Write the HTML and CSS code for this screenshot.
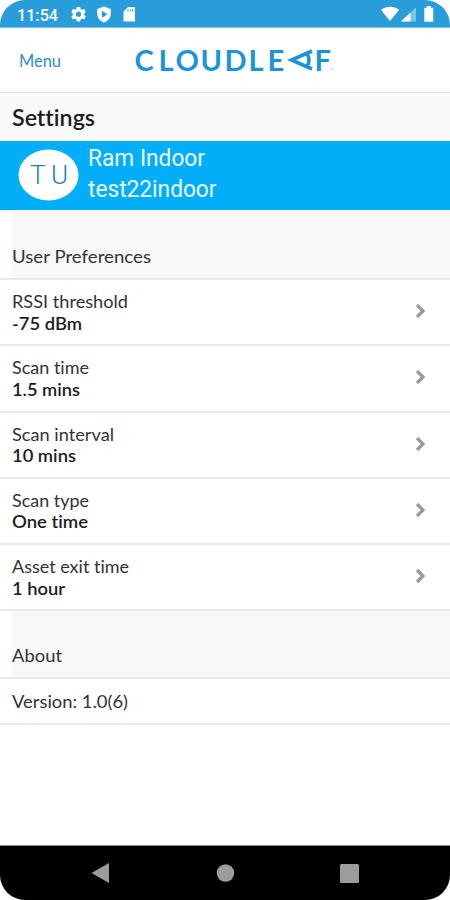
FILE: index.html
```html
<!DOCTYPE html>
<html lang="en">
<head>
<meta charset="utf-8">
<title>Settings</title>
<link rel="stylesheet" href="styles.css">
</head>
<body>
<div class="phone">
  <header class="status">
    <span class="clock"><svg width="42" height="18"><text x="0" y="15.500" textLength="41" lengthAdjust="spacingAndGlyphs">11:54</text></svg></span>
    <svg class="status-left" width="66" height="18" viewBox="0 0 66 18" fill="#fff">
      <path fill-rule="evenodd" d="M5.800 2h3.400l.5 2 1.300.8 2.100-.8 1.700 2.900-1.700 1.500v1.600l1.700 1.500-1.700 2.900-2.100-.8-1.300.8-.5 2.100H5.800l-.5-2.100-1.300-.8-2.100.8L.2 11.500 1.900 10V8.400L.2 6.900 1.900 4l2.100.8 1.300-.8zM7.500 6.600a2.600 2.600 0 1 0 0 5.200 2.600 2.600 0 0 0 0-5.200z"/>
      <path fill-rule="evenodd" d="M33 1.500l6.800 2.600v4.700c0 4-2.500 7-6.800 8.700-4.300-1.700-6.800-4.700-6.800-8.700V4.100zM30.800 5.700v7l5.800-3.500z"/>
      <path fill-rule="evenodd" d="M57 2h7v14.500H52.500V6.500zM56.500 4.500v2h1v-2zM58.700 4.500v2h1v-2zM61 4.500v2h1v-2z"/>
    </svg>
    <svg class="status-right" width="54" height="18" viewBox="0 0 54 18" fill="#fff">
      <path d="M0 5C5.300.7 12.700.7 18 5L9 16z"/>
      <path d="M35 2.500v14H20z" opacity=".4"/><path d="M29.500 7.600v8.900H20z"/>
      <path d="M45.800 1h4v1.700H52.300v14h-9V2.700h2.500z"/>
    </svg>
  </header>
  <nav class="appbar">
    <svg class="menu" width="46" height="24"><text x="0" y="17.500" textLength="42" lengthAdjust="spacingAndGlyphs">Menu</text></svg>
    <svg class="logo" width="200" height="30" viewBox="0 0 200 30">
      <text x="-1.500 22.500 39.500 64.500 88.500 112.500 131.500" y="25.500">CLOUDLE</text>
      <path d="M176 6L155.500 15l20.500 9M171 8.500q4 6.500 0 13" fill="none" stroke="#1b94d8" stroke-width="3.600"/>
      <text x="178.500" y="25.500">F</text>
      <path d="M194 24h3.500" stroke="#a9d8f0"/>
    </svg>
  </nav>
  <h1 class="title"><svg width="90" height="30"><text x="0" y="22.500" textLength="83" lengthAdjust="spacingAndGlyphs">Settings</text></svg></h1>
  <section class="profile">
    <svg class="avatar" width="60" height="52" viewBox="0 0 60 52"><ellipse cx="30.500" cy="26" rx="30" ry="25.500" fill="#fff"/><text x="12" y="34.500">T</text><text x="33" y="34.500">U</text></svg>
    <svg class="names" width="134" height="64"><text x="0" y="22" textLength="117" lengthAdjust="spacingAndGlyphs">Ram Indoor</text><text x="0" y="53" textLength="128.500" lengthAdjust="spacingAndGlyphs">test22indoor</text></svg>
  </section>
  <h2 class="section prefs"><svg width="150" height="26"><text x="0" y="18.500" textLength="139" lengthAdjust="spacingAndGlyphs">User Preferences</text></svg></h2>
  <ul class="rows">
    <li><svg class="item" width="130" height="46"><text x="0" y="18" textLength="116" lengthAdjust="spacingAndGlyphs">RSSI threshold</text><text class="value" x="0" y="39.500" textLength="70" lengthAdjust="spacingAndGlyphs">-75 dBm</text></svg><svg class="chevron" width="12" height="18"><path d="M2 3l6 6-6 6"/></svg></li>
    <li><svg class="item" width="130" height="46"><text x="0" y="18" textLength="77" lengthAdjust="spacingAndGlyphs">Scan time</text><text class="value" x="0" y="39.500" textLength="68" lengthAdjust="spacingAndGlyphs">1.5 mins</text></svg><svg class="chevron" width="12" height="18"><path d="M2 3l6 6-6 6"/></svg></li>
    <li><svg class="item" width="130" height="46"><text x="0" y="18" textLength="102" lengthAdjust="spacingAndGlyphs">Scan interval</text><text class="value" x="0" y="39" textLength="64" lengthAdjust="spacingAndGlyphs">10 mins</text></svg><svg class="chevron" width="12" height="18"><path d="M2 3l6 6-6 6"/></svg></li>
    <li><svg class="item" width="130" height="46"><text x="0" y="18" textLength="77" lengthAdjust="spacingAndGlyphs">Scan type</text><text class="value" x="0" y="39" textLength="76" lengthAdjust="spacingAndGlyphs">One time</text></svg><svg class="chevron" width="12" height="18"><path d="M2 3l6 6-6 6"/></svg></li>
    <li><svg class="item" width="130" height="46"><text x="0" y="18" textLength="117" lengthAdjust="spacingAndGlyphs">Asset exit time</text><text class="value" x="0" y="39.500" textLength="53" lengthAdjust="spacingAndGlyphs">1 hour</text></svg><svg class="chevron" width="12" height="18"><path d="M2 3l6 6-6 6"/></svg></li>
  </ul>
  <h2 class="section about"><svg width="80" height="26"><text x="0" y="18" textLength="50" lengthAdjust="spacingAndGlyphs">About</text></svg></h2>
  <div class="version"><svg width="130" height="26"><text x="0" y="18.500" textLength="116" lengthAdjust="spacingAndGlyphs">Version: 1.0(6)</text></svg></div>
  <footer class="navbar">
    <svg width="18" height="20"><path d="M0.500 10L18 0v20z"/></svg>
    <svg width="18" height="18"><circle cx="9.500" cy="9" r="8.700"/></svg>
    <svg width="19" height="19"><rect width="19" height="19" rx="1.500"/></svg>
  </footer>
</div>
</body>
</html>
```
FILE: styles.css
```css
* { box-sizing: border-box; }
body { margin: 0; background: #fff; }
svg { display: block; flex: none; overflow: visible; }
.phone {
  width: 450px;
  height: 900px;
  display: flex;
  flex-direction: column;
  overflow: hidden;
  border-radius: 25px;
  background: #fff;
  font-family: Lato, sans-serif;
  font-size: 18px;
  font-variant-ligatures: none;
}
.status {
  height: 28px;
  flex: none;
  display: flex;
  align-items: flex-start;
  padding: 5px 15px 0 17px;
  background: #299dda;
  border-bottom: 1px solid #7fc5ea;
}
.clock text { font: 500 17px Roboto, sans-serif; fill: #fff; }
.status-left { margin-left: 12px; }
.status-right { margin-left: auto; }
.appbar {
  height: 65px;
  flex: none;
  display: flex;
  align-items: flex-start;
  padding: 17px 0 0 19px;
  border-bottom: 1px solid #dedede;
}
.menu { margin-top: 4px; }
.menu text { font-size: 17px; fill: #2b8fc9; }
.logo { margin-left: 71px; }
.logo text { font-size: 29px; font-weight: 700; fill: #1b94d8; }
.title {
  height: 48px;
  flex: none;
  margin: 0;
  padding: 10px 12px 0;
  background: #fafafa;
}
.title text { font-size: 22px; font-weight: 600; fill: #1c1c1c; }
.profile {
  height: 69px;
  flex: none;
  display: flex;
  padding: 3px 0 0 18px;
  background: #02aef8;
}
.avatar { margin-top: 5px; }
.avatar text { font: 300 26px Roboto, sans-serif; fill: #217fb5; }
.names { margin-left: 10px; }
.names text { font: 400 23px Roboto, sans-serif; fill: #effaff; }
.section {
  flex: none;
  margin: 0 0 0 12px;
  background: #f8f8f8;
  font-size: 18px;
  font-weight: 400;
}
.section text, .version text, .item text { fill: #333; }
.prefs { height: 68px; padding-top: 34px; }
.about { height: 66px; padding-top: 33px; }
.rows {
  height: 333px;
  flex: none;
  margin: 0;
  padding: 0;
  display: grid;
  grid-template-rows: repeat(5, 66.3px);
  list-style: none;
  border-top: 2px solid #e9e9e9;
}
.rows li {
  display: flex;
  justify-content: space-between;
  align-items: flex-start;
  padding: 10px 23px 0 12px;
  border-bottom: 2px solid #e9e9e9;
}
.item .value { font-weight: 600; fill: #1c1c1c; }
.chevron { margin-top: 12px; }
.chevron path { fill: none; stroke: #999; stroke-width: 3.2; }
.version {
  height: 48px;
  flex: none;
  padding: 10px 12px 0;
  border-top: 2px solid #e9e9e9;
  border-bottom: 2px solid #e9e9e9;
}
.navbar {
  height: 55px;
  flex: none;
  margin-top: auto;
  display: flex;
  justify-content: space-between;
  align-items: center;
  padding: 0 91px;
  background: #000;
  border-top: 1px solid #888;
}
.navbar svg { fill: #9c9c9c; }
```
